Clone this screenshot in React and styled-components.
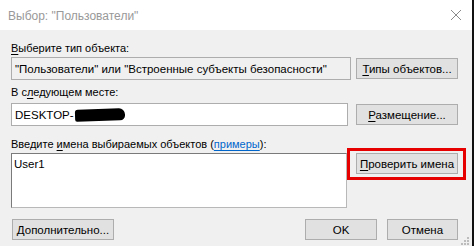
import React from 'react';
import styled, { createGlobalStyle } from 'styled-components';

const Global = createGlobalStyle`
  html, body { margin: 0; padding: 0; background: #f0f0f0; }
  body { font-family: "Liberation Sans", Arial, sans-serif; font-size: 11px; color: #000; }
`;

const Window = styled.div`
  width: 474px;
  height: 246px;
  display: flex;
  flex-direction: column;
  background: #f0f0f0;
  border-right: 2px solid #111;
  box-sizing: border-box;
  position: relative;
  overflow: hidden;
`;

const TitleBar = styled.div`
  height: 30px;
  background: #fff;
  display: flex;
  align-items: center;
  justify-content: space-between;
  padding: 0 10px 0 8px;
  flex-shrink: 0;
`;

const TitleText = styled.span`
  color: #999;
  font-size: 12px;
  padding-top: 1px;
`;

const Body = styled.div`
  flex: 1;
  padding: 11px 14px 0 11px;
  display: flex;
  flex-direction: column;
`;

const Label = styled.div`
  height: 14px;
  line-height: 14px;
  white-space: nowrap;
  margin-bottom: ${p => p.$gap ?? 2}px;
`;

const Key = styled.span`
  text-decoration: underline;
  text-underline-offset: 2px;
`;

const Link = styled.span`
  color: #0066cc;
  text-decoration: underline;
  text-underline-offset: 2px;
`;

const Row = styled.div`
  display: grid;
  grid-template-columns: ${p => p.$w || 340}px 102px;
  column-gap: ${p => p.$col || 5}px;
  align-items: ${p => p.$align || 'center'};
  margin-bottom: ${p => p.$mb ?? 5}px;
`;

const Field = styled.div`
  height: 23px;
  box-sizing: border-box;
  border: 1px solid #adadad;
  background: ${p => (p.$white ? '#fff' : '#f0f0f0')};
  display: flex;
  align-items: center;
  padding-left: 3px;
  font-size: 11.5px;
  white-space: nowrap;
  overflow: hidden;
`;

const Redacted = styled.span`
  display: inline-block;
  width: 50px;
  height: 12px;
  margin-left: 1px;
  background: #000;
  border-radius: 3px 6px 5px 2px;
  transform: rotate(-2deg);
`;

const Area = styled.div`
  height: 55px;
  box-sizing: border-box;
  background: #fff;
  border: 1px solid #b8b8b8;
  border-left-color: #7a7a7a;
  border-top-color: #7a7a7a;
  padding: 4px 2px;
  font-size: 11.5px;
`;

const Button = styled.div`
  height: 21px;
  box-sizing: border-box;
  border: 1px solid #adadad;
  background: #e1e1e1;
  display: flex;
  align-items: center;
  justify-content: center;
  white-space: nowrap;
  font-size: 11.5px;
  width: ${p => (p.$w ? `${p.$w}px` : 'auto')};
  position: relative;
  ${p => p.$marked && `
    &::after {
      content: '';
      position: absolute;
      left: -10px;
      right: -9px;
      top: -6px;
      bottom: -7px;
      border: 3px solid #e60000;
    }
  `}
`;

const Footer = styled.div`
  display: flex;
  align-items: center;
  margin-top: 11px;
  padding-left: 1px;
`;

const Spacer = styled.div`
  flex: 1;
`;

const FooterButtons = styled.div`
  display: flex;
  gap: 10px;
`;

const Grip = styled.svg`
  position: absolute;
  right: 3px;
  bottom: 1px;
`;

export default function App() {
  return (
    <>
      <Global />
      <Window>
        <TitleBar>
          <TitleText>Выбор: "Пользователи"</TitleText>
          <svg width="12" height="12" viewBox="0 0 12 12">
            <path d="M1 1 L11 11 M11 1 L1 11" stroke="#8a8a8a" strokeWidth="1" />
          </svg>
        </TitleBar>
        <Body>
          <Label><Key>В</Key>ыберите тип объекта:</Label>
          <Row>
            <Field>"Пользователи" или "Встроенные субъекты безопасности"</Field>
            <Button><span><Key>Т</Key>ипы объектов...</span></Button>
          </Row>
          <Label $gap={4}>В с<Key>л</Key>едующем месте:</Label>
          <Row $w={337} $col={8} $mb={11}>
            <Field $white>DESKTOP-<Redacted /></Field>
            <Button><span><Key>Р</Key>азмещение...</span></Button>
          </Row>
          <Label>Введите <Key>и</Key>мена выбираемых объектов (<Link>примеры</Link>):</Label>
          <Row $w={336} $col={9} $align="start" $mb={0}>
            <Area>User1</Area>
            <Button $marked><span><Key>П</Key>роверить имена</span></Button>
          </Row>
          <Footer>
            <Button $w={102}><span><Key>Д</Key>ополнительно...</span></Button>
            <Spacer />
            <FooterButtons>
              <Button $w={72}>OK</Button>
              <Button $w={71}>Отмена</Button>
            </FooterButtons>
          </Footer>
        </Body>
        <Grip width="8" height="8" viewBox="0 0 8 8">
          <rect x="6" y="0" width="2" height="2" fill="#bcbcbc" />
          <rect x="3" y="3" width="2" height="2" fill="#bcbcbc" />
          <rect x="6" y="3" width="2" height="2" fill="#bcbcbc" />
          <rect x="0" y="6" width="2" height="2" fill="#bcbcbc" />
          <rect x="3" y="6" width="2" height="2" fill="#bcbcbc" />
          <rect x="6" y="6" width="2" height="2" fill="#bcbcbc" />
        </Grip>
      </Window>
    </>
  );
}
